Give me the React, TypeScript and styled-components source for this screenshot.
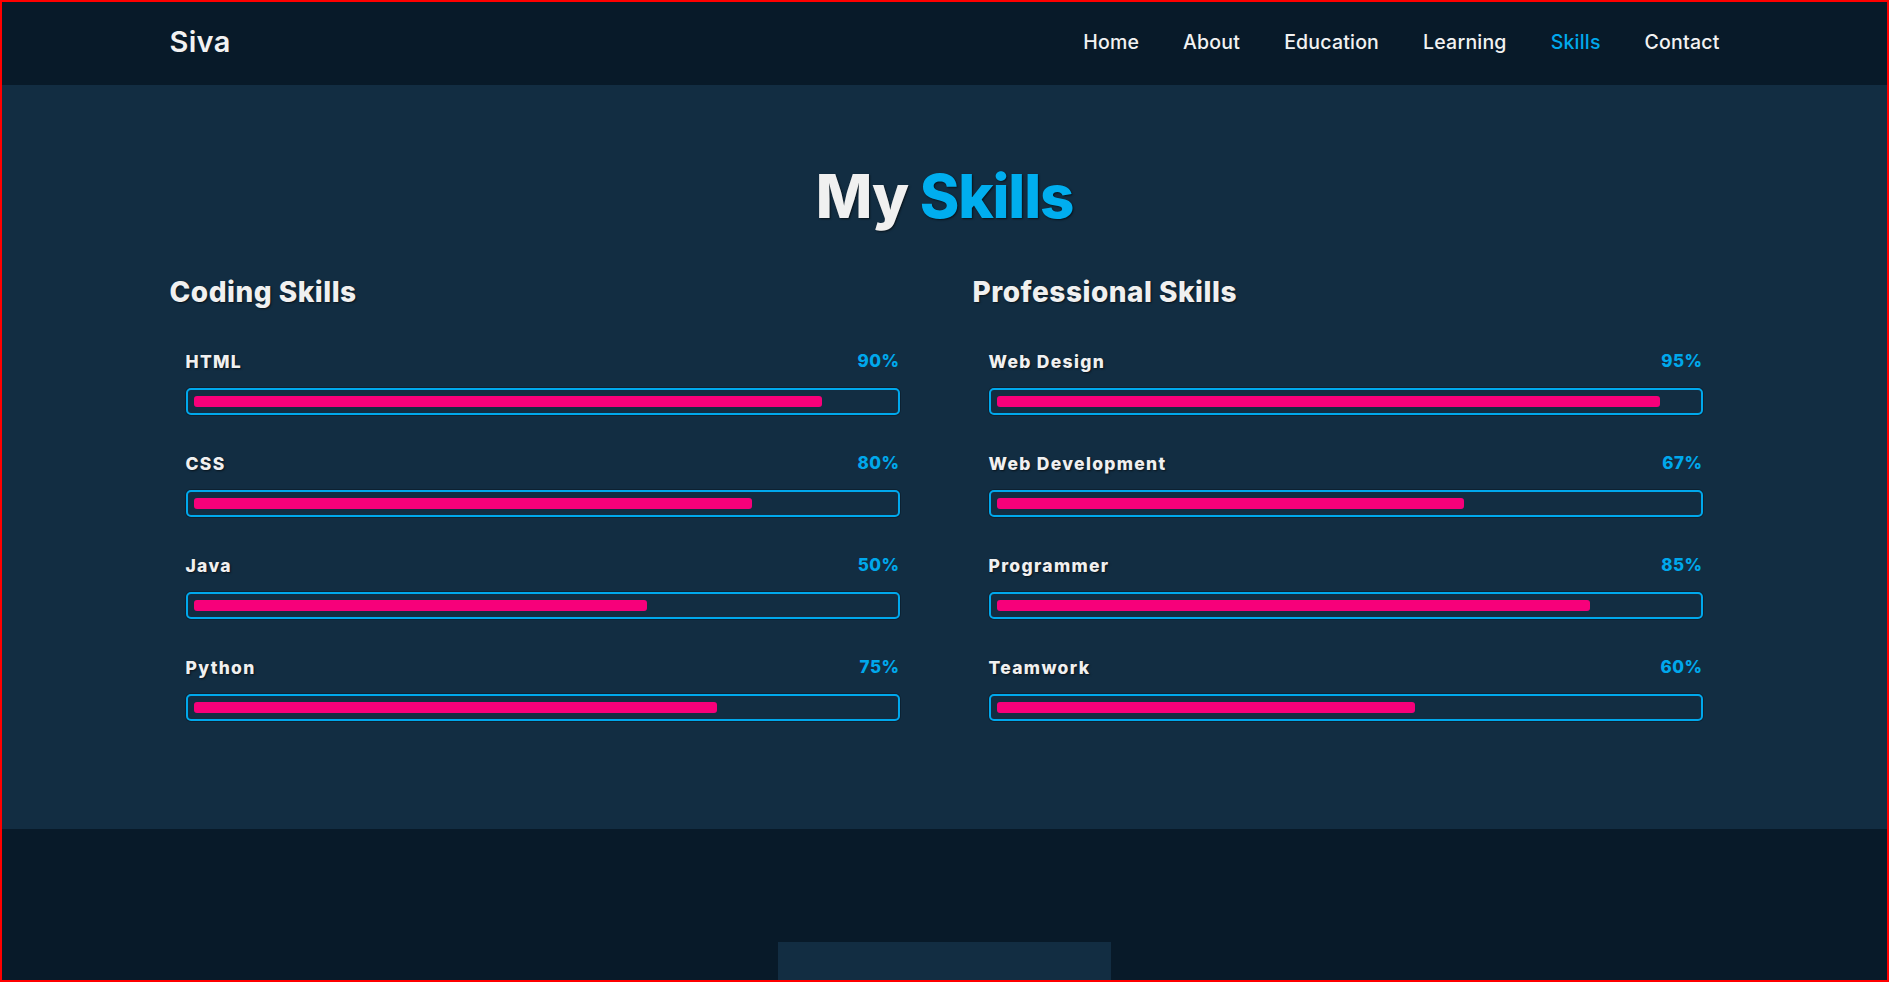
import styled, { createGlobalStyle } from "styled-components";

const GlobalStyle = createGlobalStyle`
  * {
    box-sizing: border-box;
  }
  body {
    margin: 0;
    background-color: #081a29;
    font-family: Inter, "Noto Sans", sans-serif;
    color: #f0f0f0;
  }
  body::after {
    content: "";
    position: fixed;
    inset: 0;
    border: 2px solid #ff0000;
    pointer-events: none;
  }
`;

const navLinks = ["Home", "About", "Education", "Learning", "Skills", "Contact"];

const codingSkills = [
  { name: "HTML", label: "90%", fill: 90 },
  { name: "CSS", label: "80%", fill: 80 },
  { name: "Java", label: "50%", fill: 65 },
  { name: "Python", label: "75%", fill: 75 },
];

const professionalSkills = [
  { name: "Web Design", label: "95%", fill: 95 },
  { name: "Web Development", label: "67%", fill: 67 },
  { name: "Programmer", label: "85%", fill: 85 },
  { name: "Teamwork", label: "60%", fill: 60 },
];

function SkillColumn({ title, skills }: { title: string; skills: typeof codingSkills }) {
  return (
    <Column>
      <ColumnTitle>{title}</ColumnTitle>
      <SkillList>
        {skills.map((s) => (
          <SkillItem key={s.name}>
            <SkillInfo>
              <SkillName>{s.name}</SkillName>
              <SkillPercent>{s.label}</SkillPercent>
            </SkillInfo>
            <Track>
              <Fill style={{ width: `${s.fill}%` }} />
            </Track>
          </SkillItem>
        ))}
      </SkillList>
    </Column>
  );
}

function App() {
  return (
    <>
      <GlobalStyle />
      <Header>
        <HeaderInner>
          <Logo>Siva</Logo>
          <Nav>
            {navLinks.map((l) => (
              <NavLink key={l} $active={l === "Skills"}>
                {l}
              </NavLink>
            ))}
          </Nav>
        </HeaderInner>
      </Header>

      <SkillsSection>
        <Title>
          My <span>Skills</span>
        </Title>
        <Columns>
          <SkillColumn title="Coding Skills" skills={codingSkills} />
          <SkillColumn title="Professional Skills" skills={professionalSkills} />
        </Columns>
      </SkillsSection>

      <Footer>
        <FooterBox />
      </Footer>
    </>
  );
}

const Header = styled.header`
  height: 85px;
  background-color: #081a29;
`;

const HeaderInner = styled.div`
  width: 1550px;
  height: 100%;
  margin: 0 auto;
  display: flex;
  align-items: center;
  justify-content: space-between;
  padding-bottom: 2px;
`;

const Logo = styled.div`
  font-size: 29px;
  font-weight: 600;
  color: #f2f2f2;
  letter-spacing: 0.3px;
`;

const Nav = styled.nav`
  display: flex;
  gap: 44px;
`;

const NavLink = styled.a<{ $active?: boolean }>`
  font-size: 19.5px;
  font-weight: 500;
  letter-spacing: 0.2px;
  color: ${(p) => (p.$active ? "#00a8ec" : "#f2f2f2")};
  cursor: pointer;
  text-decoration: none;
`;

const SkillsSection = styled.section`
  background-color: #122d42;
  padding: 72px 0 108px;
`;

const Title = styled.h2`
  margin: 0;
  text-align: center;
  font-size: 60px;
  line-height: 78px;
  font-weight: 800;
  color: #f0f0f0;
  letter-spacing: -1.2px;
  text-shadow: 1px 1px 2px rgba(0, 0, 0, 0.6);

  span {
    color: #00aeef;
  }
`;

const Columns = styled.div`
  width: 1550px;
  margin: 37px auto 0;
  display: grid;
  grid-template-columns: 746px 746px;
  column-gap: 57px;
`;

const Column = styled.div`
  display: flex;
  flex-direction: column;
`;

const ColumnTitle = styled.h3`
  margin: 0;
  font-size: 28px;
  line-height: 40px;
  font-weight: 800;
  color: #f0f0f0;
  letter-spacing: 0.5px;
  text-shadow: 1px 1px 2px rgba(0, 0, 0, 0.6);
`;

const SkillList = styled.div`
  display: flex;
  flex-direction: column;
  gap: 36px;
  margin-top: 37px;
  padding: 0 16px;
`;

const SkillItem = styled.div`
  display: flex;
  flex-direction: column;
  gap: 15px;
`;

const SkillInfo = styled.div`
  display: flex;
  justify-content: space-between;
  align-items: center;
  height: 24px;
`;

const SkillName = styled.span`
  font-size: 17.5px;
  font-weight: 800;
  color: #f0f0f0;
  letter-spacing: 1.3px;
  text-shadow: 1px 1px 2px rgba(0, 0, 0, 0.6);
`;

const SkillPercent = styled.span`
  font-size: 17px;
  font-weight: 800;
  color: #00a8ec;
  letter-spacing: 0.5px;
`;

const Track = styled.div`
  height: 27px;
  border: 2px solid #00a8ec;
  border-radius: 5px;
  padding: 6px;
  box-shadow: 0 0 0 1px rgba(0, 0, 0, 0.25);
`;

const Fill = styled.div`
  height: 100%;
  background-color: #f7007a;
  border-radius: 3px;
`;

const Footer = styled.footer`
  height: 153px;
  background-color: #081a29;
  padding-top: 113px;
  display: flex;
  justify-content: center;
  overflow: hidden;
`;

const FooterBox = styled.div`
  width: 333px;
  height: 80px;
  background-color: #122d42;
`;

export default App;
